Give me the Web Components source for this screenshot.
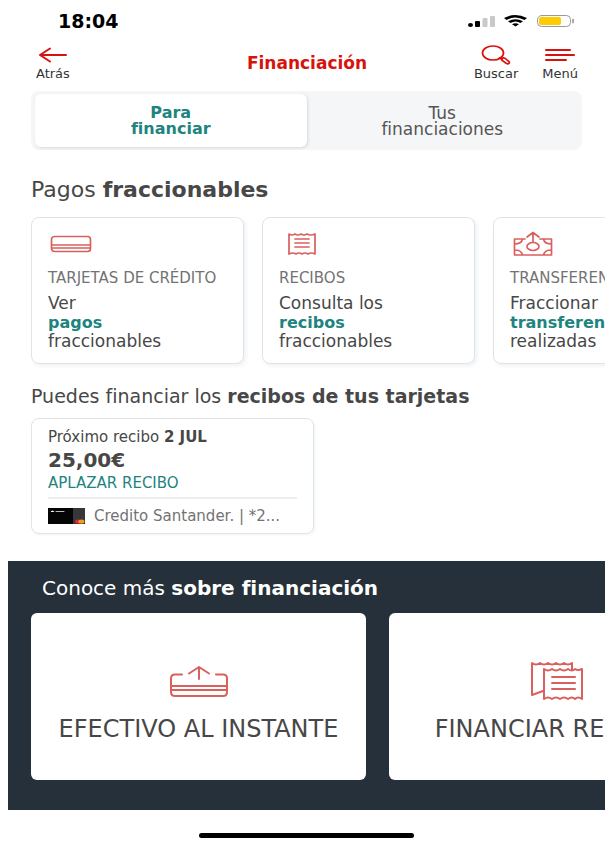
<!DOCTYPE html>
<html lang="es">
<head>
<meta charset="utf-8">
<meta name="viewport" content="width=device-width, initial-scale=1">
<title>Financiación</title>
<style>
  :root {
    --red: #d8120c;
    --coral: #d9605c;
    --teal: #1d8480;
    --ink: #474747;
    --muted: #737373;
    --line: #dfe4e8;
    --navy: #25303a;
  }
  body {
    margin: 0;
    background: #fff;
    color: var(--ink);
    font-family: "DejaVu Sans", sans-serif;
    font-size: 17px;
    line-height: 19px;
  }
</style>
</head>
<body>
<finance-screen></finance-screen>
<script>
const ICONS = {
  back: [30, 16, '<path d="M28 8H2M12 1.500L2 8l10 6.500" stroke-width="2"/>'],
  search: [30, 20, '<ellipse cx="12" cy="8" rx="10.500" ry="7"/><path d="M18.500 13l2.500 1.500M21 13.500c1.500-1.300 3-.5 4.500 1s3.500 2 2.800 3.500c-1 1.500-3 .7-4.500-.7s-4.300-2.200-2.800-3.800z"/>'],
  menu: [30, 14, '<path d="M1 2h24M1 7h28M1 12h20" stroke-width="2"/>'],
  card: [42, 18, '<rect x="1.500" y="1.500" width="39" height="15" rx="3"/><path d="M2 10h38M2 13h38"/>'],
  receipt: [30, 24, '<path d="M2 2q3 2 6 0q3 2 6 0q3 2 6 0q3 2 8 0V22q-4-2-7 0q-3-2-6 0q-3-2-6 0q-3-2-7 0zM8 7h14M8 11h14M8 15h14"/>'],
  transfer: [40, 26, '<path d="M12 8H1.500v16h37V8H27M1.500 13C6 13 9 11 9.500 8M38.500 13C34 13 31 11 30.500 8M1.500 19c4.500 0 7.500 2 8 5M38.500 19c-4.500 0-7.500 2-8 5M20 11V2M14 6l6-4.500L26 6"/><ellipse cx="20" cy="15.500" rx="6" ry="4"/>'],
  cash: [60, 32, '<path d="M13 9.500H6q-4 0-4 4V27q0 4 4 4h48q4 0 4-4V13.500q0-4-4-4H47M2 21h56M2 25h56M30 14V2M20 8.500L30 2l10 6.500" stroke-width="2"/>'],
  receipts: [54, 40, '<path d="M42 8V2q-4 3-8 0q-4 3-8 0q-4 3-8 0q-4 3-8 0q-4 3-8 0V34l11-4M14 8q4 3 8 0q4 3 8 0q4 3 8 0q4 3 7 0q3 2 7 0V38q-4-3-7 0q-3-3-7 0q-4-3-8 0q-4-3-8 0q-4-3-8 0zM22 16h23M22 22h23M22 28h23" stroke-width="2"/>'],
  status: [106, 14, '<g fill="#000" stroke="none"><ellipse cx="2.500" cy="11" rx="2.500" ry="2"/><rect x="7" y="7" width="5" height="6" rx="1"/><g fill="#c9c9c9"><rect x="14.500" y="4" width="5" height="9" rx="1"/><rect x="22" y="2" width="5" height="11" rx="1"/></g><path d="M36 4Q47-2 59 4l-2.500 2Q47 1 38.500 6zM40 7.300q7.500-4.300 15 0l-2.500 1.700q-5-3-10 0zM44 10.300q3.500-2 7 0L47.500 12.500z"/></g><rect x="69.500" y="1.500" width="33" height="11" rx="4" stroke="#999" stroke-width="1"/><rect x="71" y="3" width="22" height="8" rx="2" fill="#fc0" stroke="none"/><path d="M105 5.500v3" stroke="#999"/>'],
  bankcard: [37, 16, '<rect width="37" height="16" fill="#050505" stroke="none"/><path d="M25 0h12v16H25z" fill="#35373a" stroke="none"/><path d="M2.500 4q2-3 4 0z" fill="#fff" stroke="none"/><path d="M8 3.500h8" stroke="#bbb" stroke-width="1"/><ellipse cx="30" cy="13.500" rx="3" ry="2" fill="#e8242c" stroke="none"/><ellipse cx="33.500" cy="13.500" rx="3" ry="2" fill="#f79a1c" stroke="none"/>']
};

const define = (name, html) => {
  const template = document.createElement('template');
  template.innerHTML = html;
  customElements.define(name, class extends HTMLElement {
    connectedCallback() {
      if (this.shadowRoot) return;
      this.attachShadow({ mode: 'open' }).append(template.content.cloneNode(true));
    }
  });
};

customElements.define('line-icon', class extends HTMLElement {
  connectedCallback() {
    if (this.shadowRoot) return;
    const [w, h, art] = ICONS[this.getAttribute('name')];
    this.attachShadow({ mode: 'open' }).innerHTML = `
      <style>:host{display:inline-block;flex:none} svg{display:block;overflow:visible}</style>
      <svg width="${w}" height="${h}" viewBox="0 0 ${w} ${h}" fill="none" stroke="currentColor"
        stroke-width="1.7" stroke-linecap="round" stroke-linejoin="round" aria-hidden="true">${art}</svg>`;
  }
});

define('status-bar', `
  <style>
    :host{display:flex;justify-content:space-between;align-items:center;padding:10px 31px 0 50px;
      color:#000;font-weight:bold;font-size:19px;line-height:22px}
  </style>
  <slot></slot><line-icon name="status"></line-icon>`);

define('nav-action', `
  <style>
    :host{display:block}
    button{display:flex;flex-direction:column;align-items:center;justify-content:space-between;height:36px;
      margin:0;padding:0;border:0;background:none;color:#333;font:inherit;font-size:13px;line-height:14px;cursor:pointer}
    .art{display:flex;align-items:center;height:20px;color:var(--red)}
  </style>
  <button type="button"><span class="art"><slot name="icon"></slot></span><slot></slot></button>`);

define('app-header', `
  <style>
    :host{display:grid;grid-template-columns:1fr auto 1fr;align-items:center;padding:13px 27px 0 28px}
    h1{margin:0;color:var(--red);font-size:17px;line-height:20px}
    .end{display:flex;justify-content:flex-end;gap:24px}
  </style>
  <div><slot name="start"></slot></div>
  <h1><slot></slot></h1>
  <div class="end"><slot name="end"></slot></div>`);

define('segment-tabs', `
  <style>
    :host{display:grid;grid-template-columns:1fr 1fr;margin:10px 23px 0;padding:3px 4px;border-radius:8px;background:#f5f6f8}
    ::slotted(button){height:53px;margin:0;padding:0;border:0;border-radius:6px;background:none;
      color:#555;font:inherit;font-size:17px;line-height:16px;cursor:pointer}
    ::slotted([aria-selected=true]){background:#fff;color:var(--teal);font-weight:bold;font-size:16px;box-shadow:1px 1px 3px #d5d8dc}
  </style>
  <slot></slot>`);

define('section-title', `
  <style>
    :host{display:block}
    h2{margin:0;font-weight:normal;font-size:var(--title-size,19px);line-height:24px}
  </style>
  <h2><slot></slot></h2>`);

define('card-row', `
  <style>
    :host{display:flex;gap:var(--row-gap,18px);padding:0 0 6px 23px;overflow-x:auto;scrollbar-width:none}
  </style>
  <slot></slot>`);

define('product-card', `
  <style>
    :host{flex:0 0 213px;display:block}
    a{display:block;box-sizing:border-box;padding:13px 16px 12px;border:1px solid var(--line);border-radius:8px;
      background:#fff;box-shadow:2px 2px 4px #eef1f4;color:inherit;text-decoration:none;white-space:nowrap}
    .art{display:flex;align-items:center;justify-content:center;width:46px;height:26px;color:var(--coral)}
    .name{padding:12px 0 7px;color:var(--muted);font-size:15px;line-height:18px}
    ::slotted(b){display:block;color:var(--teal);font-size:16px}
  </style>
  <a href="#"><div class="art"><slot name="icon"></slot></div>
    <div class="name"><slot name="name"></slot></div><div><slot></slot></div></a>`);

define('receipt-card', `
  <style>
    :host{display:block;box-sizing:border-box;width:283px;margin:10px 0 0 23px;padding:8px 16px 7px;
      border:1px solid var(--line);border-radius:8px;box-shadow:1px 1px 3px #f0f2f5;font-size:15px;line-height:20px}
    .amount{font-size:20px;line-height:26px;font-weight:bold}
    a{display:block;color:var(--teal);text-decoration:none}
    .foot{display:flex;align-items:center;gap:9px;margin-top:4px;padding-top:7px;border-top:2px solid #eceeef;
      color:var(--muted);line-height:20px;white-space:nowrap}
  </style>
  <div><slot name="due"></slot></div>
  <div class="amount"><slot name="amount"></slot></div>
  <a href="#"><slot name="action"></slot></a>
  <div class="foot"><line-icon name="bankcard"></line-icon><span><slot name="account"></slot></span></div>`);

define('promo-card', `
  <style>
    :host{flex:0 0 335px;display:block}
    a{display:flex;flex-direction:column;align-items:center;gap:14px;padding:48px 0 37px;border-radius:6px;
      background:#fff;color:var(--ink);font-size:24px;line-height:28px;text-decoration:none;white-space:nowrap}
    .art{display:flex;align-items:center;height:40px;color:var(--coral)}
  </style>
  <a href="#"><span class="art"><slot name="icon"></slot></span><slot></slot></a>`);

define('promo-band', `
  <style>
    :host{display:block;margin-top:27px;padding:15px 0 24px;background:var(--navy);color:#fff;--row-gap:23px;--title-size:20px}
    .head{padding:0 34px 13px}
  </style>
  <div class="head"><slot name="title"></slot></div><slot></slot>`);

define('home-indicator', `
  <style>
    :host{display:flex;justify-content:center;padding:23px 0 8px}
    span{width:36%;height:5px;border-radius:3px;background:#000}
  </style><span></span>`);

define('finance-screen', `
  <style>
    :host{display:block;margin:0 5px 0 8px;overflow:hidden}
    .big{--title-size:22px;margin:28px 23px 15px}
    .mid{--title-size:19px;margin:14px 23px 0}
  </style>
  <status-bar>18:04</status-bar>
  <app-header>
    <nav-action slot="start"><line-icon slot="icon" name="back"></line-icon>Atrás</nav-action>
    Financiación
    <nav-action slot="end"><line-icon slot="icon" name="search"></line-icon>Buscar</nav-action>
    <nav-action slot="end"><line-icon slot="icon" name="menu"></line-icon>Menú</nav-action>
  </app-header>
  <segment-tabs role="tablist">
    <button type="button" role="tab" aria-selected="true">Para<br>financiar</button>
    <button type="button" role="tab" aria-selected="false">Tus<br>financiaciones</button>
  </segment-tabs>
  <section-title class="big">Pagos <b>fraccionables</b></section-title>
  <card-row>
    <product-card><line-icon slot="icon" name="card"></line-icon><span slot="name">TARJETAS DE CRÉDITO</span>Ver <b>pagos</b> fraccionables</product-card>
    <product-card><line-icon slot="icon" name="receipt"></line-icon><span slot="name">RECIBOS</span>Consulta los <b>recibos</b> fraccionables</product-card>
    <product-card><line-icon slot="icon" name="transfer"></line-icon><span slot="name">TRANSFERENCIAS</span>Fraccionar <b>transferencias</b> realizadas</product-card>
  </card-row>
  <section-title class="mid">Puedes financiar los <b>recibos de tus tarjetas</b></section-title>
  <receipt-card>
    <span slot="due">Próximo recibo <b>2 JUL</b></span>
    <span slot="amount">25,00€</span>
    <span slot="action">APLAZAR RECIBO</span>
    <span slot="account">Credito Santander. | *2...</span>
  </receipt-card>
  <promo-band>
    <section-title slot="title">Conoce más <b>sobre financiación</b></section-title>
    <card-row>
      <promo-card><line-icon slot="icon" name="cash"></line-icon>EFECTIVO AL INSTANTE</promo-card>
      <promo-card><line-icon slot="icon" name="receipts"></line-icon>FINANCIAR RECIBOS</promo-card>
    </card-row>
  </promo-band>
  <home-indicator></home-indicator>`);
</script>
</body>
</html>
